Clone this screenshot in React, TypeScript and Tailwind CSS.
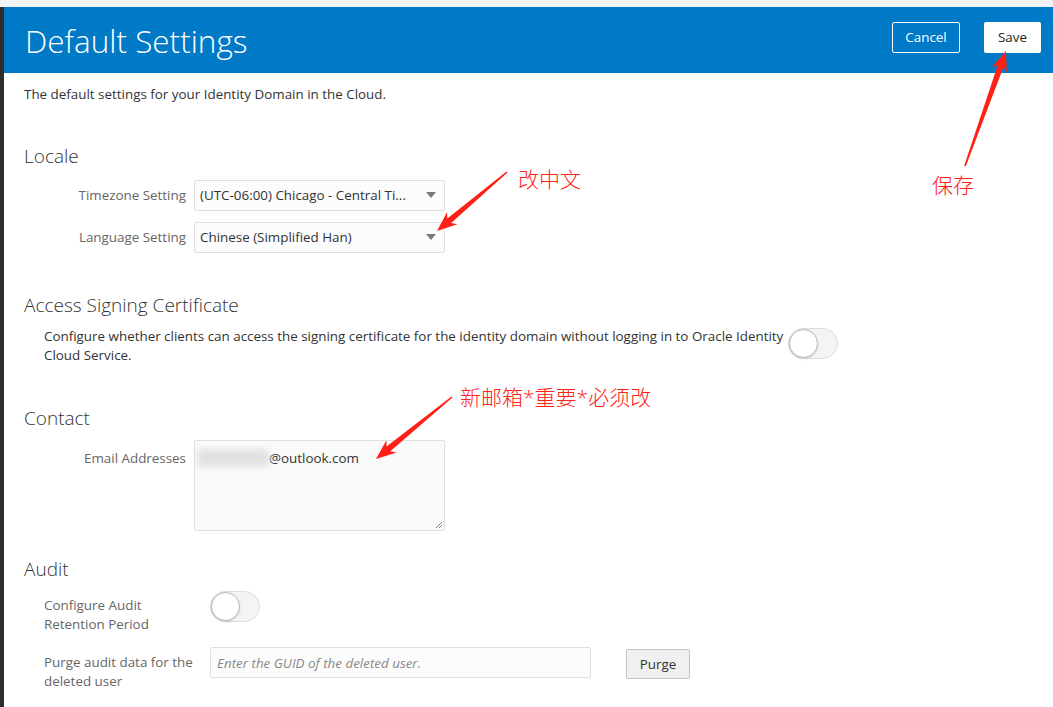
const font = { fontFamily: '"Open Sans", "Noto Sans CJK SC", sans-serif' }

function Arrow({ x1, y1, x2, y2 }: { x1: number; y1: number; x2: number; y2: number }) {
  // tapered red arrow from (x1,y1) tail to (x2,y2) tip
  const dx = x2 - x1
  const dy = y2 - y1
  const len = Math.hypot(dx, dy)
  const ux = dx / len
  const uy = dy / len
  const nx = -uy
  const ny = ux
  const head = 20
  const bx = x2 - ux * head
  const by = y2 - uy * head
  const p = (x: number, y: number) => `${x.toFixed(1)},${y.toFixed(1)}`
  const pts = [
    p(x1 + nx * 0.8, y1 + ny * 0.8),
    p(bx + ux * 4 + nx * 3, by + uy * 4 + ny * 3),
    p(bx + nx * 8, by + ny * 8),
    p(x2, y2),
    p(bx - nx * 8, by - ny * 8),
    p(bx + ux * 4 - nx * 3, by + uy * 4 - ny * 3),
    p(x1 - nx * 0.8, y1 - ny * 0.8),
  ].join(' ')
  return <polygon points={pts} fill="#ff2116" />
}

function Toggle({ className = '' }: { className?: string }) {
  return (
    <div className={`w-[50px] h-[31px] rounded-full bg-[#f4f4f4] border border-[#dcdcdc] relative shrink-0 ${className}`}>
      <div className="absolute left-0 top-0 w-[29px] h-[29px] rounded-full bg-white border border-[#b8b8b8] shadow-sm" />
    </div>
  )
}

function Select({ value }: { value: string }) {
  return (
    <div className="w-[251px] h-[31px] border border-[#dfdfdf] rounded-[2px] bg-[#fcfcfc] flex items-center justify-between pl-[5px] pr-[8px] text-[13.4px] text-[#333]">
      <span className="truncate">{value}</span>
      <span className="w-0 h-0 border-l-[5px] border-r-[5px] border-t-[6px] border-l-transparent border-r-transparent border-t-[#7a7a7a] ml-2" />
    </div>
  )
}

export default function App() {
  return (
    <div className="relative w-[1053px] h-[707px] overflow-hidden bg-white flex flex-col" style={font}>
      <div className="h-[7px] bg-[#f3f3f5] shrink-0" />
      <div className="flex flex-1 min-h-0">
        <div className="w-[4px] bg-[#2d2d2d] shrink-0" />
        <div className="flex-1 flex flex-col">
          <div className="h-[66px] bg-[#0079c6] flex items-center justify-between pl-[21px] pr-[12px]">
            <h1 className="text-[31.5px] font-light text-white leading-none mt-[2px]">Default Settings</h1>
            <div className="flex items-center gap-[24px] mb-[5px]">
              <button className="w-[68px] h-[31px] border border-white rounded-[2px] text-white text-[13.4px]">Cancel</button>
              <button className="w-[57px] h-[31px] bg-white rounded-[2px] text-[#222] text-[13.4px]">Save</button>
            </div>
          </div>

          <div className="pl-[20px] pt-[11px]">
            <p className="text-[13.4px] text-[#333]">The default settings for your Identity Domain in the Cloud.</p>

            <h2 className="text-[19px] font-light text-[#333] mt-[38px]">Locale</h2>
            <div className="mt-[9px] flex flex-col gap-[11px]">
              <div className="flex items-center gap-[8px]">
                <span className="w-[162px] text-right text-[13.4px] text-[#666]">Timezone Setting</span>
                <Select value="(UTC-06:00) Chicago - Central Ti..." />
              </div>
              <div className="flex items-center gap-[8px]">
                <span className="w-[162px] text-right text-[13.4px] text-[#666]">Language Setting</span>
                <Select value="Chinese (Simplified Han)" />
              </div>
            </div>

            <h2 className="text-[19px] font-light text-[#333] mt-[38px]">Access Signing Certificate</h2>
            <div className="mt-[5px] pl-[20px] flex items-start">
              <p className="w-[744px] text-[13.4px] text-[#333] leading-[19px] pt-[3px]">
                Configure whether clients can access the signing certificate for the identity domain without logging in to Oracle Identity Cloud Service.
              </p>
              <Toggle className="mt-[4px]" />
            </div>

            <h2 className="text-[19px] font-light text-[#333] mt-[39px]">Contact</h2>
            <div className="mt-[7px] flex items-start gap-[8px]">
              <span className="w-[162px] text-right text-[13.4px] text-[#666] pt-[8px]">Email Addresses</span>
              <div className="w-[251px] h-[91px] border border-[#dfdfdf] rounded-[2px] bg-[#fafafa] relative text-[13.4px] text-[#333] pt-[7px] pl-[2px]">
                <span className="inline-flex items-center">
                  <span className="inline-block w-[72px] h-[18px] bg-[#e2e2e2] blur-[3px]" />
                  <span>@outlook.com</span>
                </span>
                <svg className="absolute right-[1px] bottom-[1px]" width="8" height="8" viewBox="0 0 8 8">
                  <path d="M7 1L1 7M7 4L4 7" stroke="#888" strokeWidth="1" />
                </svg>
              </div>
            </div>

            <h2 className="text-[19px] font-light text-[#333] mt-[24px]">Audit</h2>
            <div className="mt-[8px] pl-[20px] flex flex-col gap-[13px]">
              <div className="flex items-start">
                <span className="w-[166px] text-[13.4px] text-[#666] leading-[19px] pt-[5px]">Configure Audit<br />Retention Period</span>
                <Toggle />
              </div>
              <div className="flex items-start">
                <span className="w-[166px] text-[13.4px] text-[#666] leading-[19px] pt-[6px]">Purge audit data for the deleted user</span>
                <div className="w-[381px] h-[31px] border border-[#dfdfdf] rounded-[2px] bg-[#fcfcfc] flex items-center pl-[6px] text-[13.4px] italic text-[#888]">
                  Enter the GUID of the deleted user.
                </div>
                <button className="ml-[35px] mt-[2px] w-[64px] h-[30px] border border-[#c4c4c4] rounded-[2px] bg-[#f0f0f0] text-[13.4px] text-[#333]">Purge</button>
              </div>
            </div>
          </div>
        </div>
      </div>

      {/* annotations */}
      <svg className="absolute inset-0 pointer-events-none" width="1053" height="707">
        <Arrow x1={507} y1={172} x2={437} y2={231} />
        <Arrow x1={965} y1={166} x2={1006} y2={51} />
        <Arrow x1={452} y1={397} x2={376} y2={459} />
      </svg>
      <span className="absolute left-[518px] top-[169px] text-[21px] font-light text-[#ff2116] leading-none">改中文</span>
      <span className="absolute left-[932px] top-[175px] text-[21px] font-light text-[#ff2116] leading-none">保存</span>
      <span className="absolute left-[460px] top-[387px] text-[21px] font-light text-[#ff2116] leading-none">新邮箱*重要*必须改</span>
    </div>
  )
}
